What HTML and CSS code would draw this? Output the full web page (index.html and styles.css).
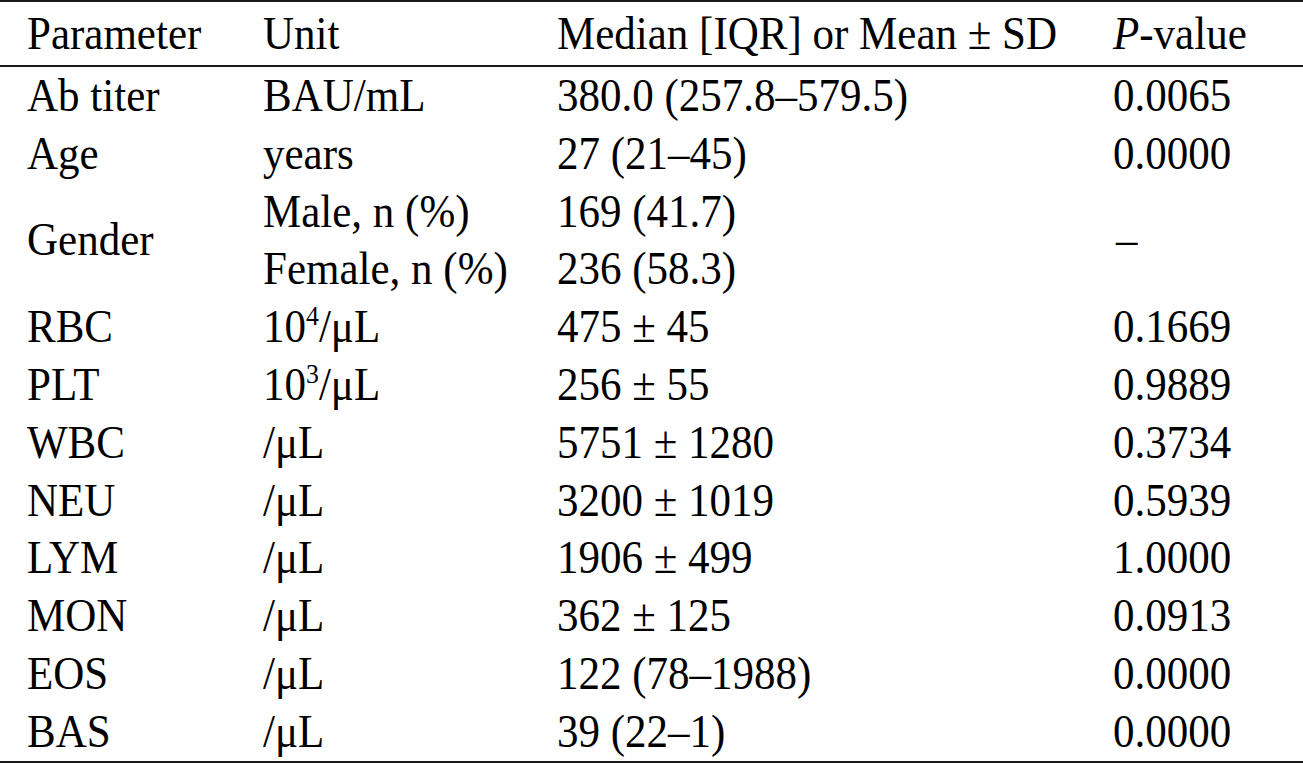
FILE: index.html
```html
<!DOCTYPE html>
<html lang="en">
<head>
<meta charset="utf-8">
<title>Parameters</title>
<link rel="stylesheet" href="styles.css">
</head>
<body>
<table class="stats">
  <colgroup>
    <col class="c-param">
    <col class="c-unit">
    <col class="c-value">
    <col class="c-p">
  </colgroup>
  <thead>
    <tr>
      <th class="first"><span class="v">Parameter</span></th>
      <th><span class="v">Unit</span></th>
      <th><span class="v">Median [IQR] or Mean ± SD</span></th>
      <th><span class="v"><i>P</i>-value</span></th>
    </tr>
  </thead>
  <tbody>
    <tr><td class="first"><span class="v">Ab titer</span></td><td><span class="v">BAU/mL</span></td><td><span class="v">380.0 (257.8–579.5)</span></td><td><span class="v">0.0065</span></td></tr>
    <tr><td class="first"><span class="v">Age</span></td><td><span class="v">years</span></td><td><span class="v">27 (21–45)</span></td><td><span class="v">0.0000</span></td></tr>
    <tr><td class="first" rowspan="2"><span class="v">Gender</span></td><td><span class="v">Male, n (%)</span></td><td><span class="v">169 (41.7)</span></td><td rowspan="2" class="dash"><span class="v">–</span></td></tr>
    <tr><td><span class="v">Female, n (%)</span></td><td><span class="v">236 (58.3)</span></td></tr>
    <tr><td class="first"><span class="v">RBC</span></td><td><span class="v">10<sup>4</sup>/μL</span></td><td><span class="v">475 ± 45</span></td><td><span class="v">0.1669</span></td></tr>
    <tr><td class="first"><span class="v">PLT</span></td><td><span class="v">10<sup>3</sup>/μL</span></td><td><span class="v">256 ± 55</span></td><td><span class="v">0.9889</span></td></tr>
    <tr><td class="first"><span class="v">WBC</span></td><td><span class="v">/μL</span></td><td><span class="v">5751 ± 1280</span></td><td><span class="v">0.3734</span></td></tr>
    <tr><td class="first"><span class="v">NEU</span></td><td><span class="v">/μL</span></td><td><span class="v">3200 ± 1019</span></td><td><span class="v">0.5939</span></td></tr>
    <tr><td class="first"><span class="v">LYM</span></td><td><span class="v">/μL</span></td><td><span class="v">1906 ± 499</span></td><td><span class="v">1.0000</span></td></tr>
    <tr><td class="first"><span class="v">MON</span></td><td><span class="v">/μL</span></td><td><span class="v">362 ± 125</span></td><td><span class="v">0.0913</span></td></tr>
    <tr><td class="first"><span class="v">EOS</span></td><td><span class="v">/μL</span></td><td><span class="v">122 (78–1988)</span></td><td><span class="v">0.0000</span></td></tr>
    <tr><td class="first"><span class="v">BAS</span></td><td><span class="v">/μL</span></td><td><span class="v">39 (22–1)</span></td><td><span class="v">0.0000</span></td></tr>
  </tbody>
</table>
</body>
</html>
```
FILE: styles.css
```css
html, body {
  margin: 0;
  padding: 0;
  background: #ffffff;
}

body {
  font-family: "Liberation Serif", "Times New Roman", serif;
  color: #000000;
}

.stats {
  width: 1303px;
  border-collapse: collapse;
  table-layout: fixed;
  font-size: 43px;
  border-top: 2px solid #1a1a1a;
  border-bottom: 2px solid #1a1a1a;
}

.c-param { width: 263px; }
.c-unit { width: 294px; }
.c-value { width: 556px; }
.c-p { width: 190px; }

.stats th,
.stats td {
  padding: 0;
  text-align: left;
  font-weight: normal;
  white-space: nowrap;
  vertical-align: middle;
}

.stats th {
  height: 63px;
  line-height: 63px;
  border-bottom: 2px solid #1a1a1a;
}

.stats td {
  height: 57.8px;
  line-height: 57.8px;
}

.stats .v {
  display: inline-block;
  transform: scaleY(1.1);
  transform-origin: 50% 50%;
}

.stats .first {
  padding-left: 27px;
}

.stats sup {
  font-size: 0.6em;
  line-height: 0;
  vertical-align: 0.6em;
}

.stats .dash {
  padding-left: 3px;
}
```
